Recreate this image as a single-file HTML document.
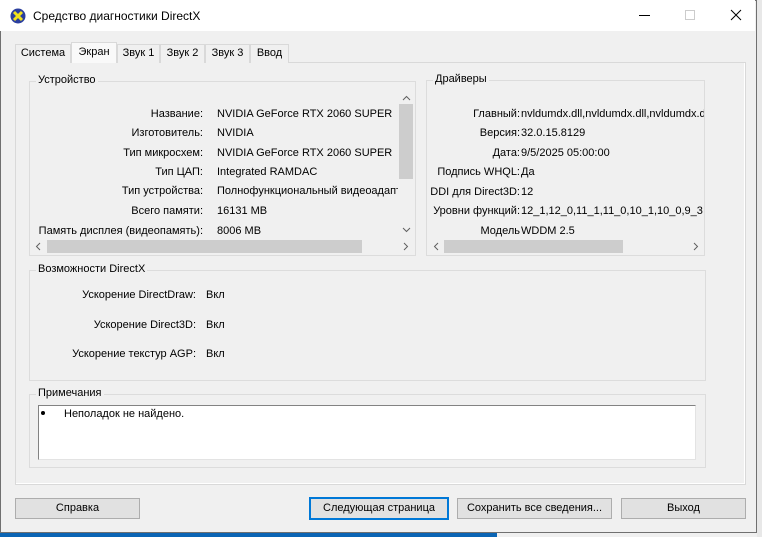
<!DOCTYPE html>
<html><head><meta charset="utf-8"><style>
*{box-sizing:border-box;margin:0;padding:0}
body{width:762px;height:537px;overflow:hidden;background:#f0f0f0;font-family:"Liberation Sans","DejaVu Sans",sans-serif;font-size:11px;color:#000;position:relative}
.a{position:absolute}
.win{left:0;top:0;width:757px;height:533px;border:1px solid #707070;background:#f0f0f0}
.title{left:0;top:0;width:755px;height:31px;background:#fff}
.grp{border:1px solid #dcdcdc}
.lbl{position:absolute;background:#f0f0f0;padding:0 2px;top:-8px;left:6px;white-space:nowrap}
.r{text-align:right;white-space:nowrap}
.l{white-space:nowrap}
.btn{border:1px solid #adadad;background:#e1e1e1;text-align:center;line-height:19px;height:21px}
.tab{top:44px;height:19px;border:1px solid #d9d9d9;border-bottom:none;background:#f0f0f0;text-align:center;line-height:17px}
svg.ar{position:absolute}
</style></head><body>
<div class="a" style="left:0;top:533px;width:497px;height:4px;background:#0a64b4"></div>
<div class="a" style="left:757px;top:0;width:5px;height:537px;background:#e8e8e8"></div>
<div class="a win"></div>
<div class="a title"></div>
<svg class="a" style="left:10px;top:8px" width="16" height="16"><circle cx="8" cy="8" r="7.5" fill="#2b3f9e"/><path d="M4 4L12 12M12 4L4 12" stroke="#f2e21c" stroke-width="3"/></svg>
<div class="a l" style="left:33px;top:9px;font-size:12px">Средство диагностики DirectX</div>
<div class="a" style="left:639px;top:15px;width:11px;height:1px;background:#000"></div>
<div class="a" style="left:685px;top:10px;width:10px;height:10px;border:1px solid #ccc"></div>
<svg class="a" style="left:730px;top:9px" width="12" height="12"><path d="M1 1L11 11M11 1L1 11" stroke="#000" stroke-width="1"/></svg>

<div class="a" style="left:15px;top:62px;width:731px;height:423px;border:1px solid #d9d9d9;background:#f9f9f9"></div>
<div class="a tab" style="left:15px;width:56px">Система</div>
<div class="a tab" style="left:71px;top:42px;height:21px;width:46px;background:#f9f9f9;line-height:19px">Экран</div>
<div class="a tab" style="left:117px;width:43px">Звук 1</div>
<div class="a tab" style="left:160px;width:45px">Звук 2</div>
<div class="a tab" style="left:205px;width:45px">Звук 3</div>
<div class="a tab" style="left:250px;width:39px">Ввод</div>
<div class="a" style="left:16px;top:63px;width:729px;height:421px;background:#f0f0f0;border-right:1px solid #fff;border-bottom:1px solid #fff"></div>

<div class="a grp" style="left:29px;top:81px;width:387px;height:175px"><span class="lbl">Устройство</span></div>
<div class="a r" style="left:30px;top:108px;width:173px">Название:</div>
<div class="a r" style="left:30px;top:127px;width:173px">Изготовитель:</div>
<div class="a r" style="left:30px;top:147px;width:173px">Тип микросхем:</div>
<div class="a r" style="left:30px;top:166px;width:173px">Тип ЦАП:</div>
<div class="a r" style="left:30px;top:185px;width:173px">Тип устройства:</div>
<div class="a r" style="left:30px;top:205px;width:173px">Всего памяти:</div>
<div class="a r" style="left:30px;top:225px;width:173px">Память дисплея (видеопамять):</div>
<div class="a" style="left:217px;top:100px;width:181px;height:138px;overflow:hidden">
<div class="l" style="position:absolute;top:8px">NVIDIA GeForce RTX 2060 SUPER</div>
<div class="l" style="position:absolute;top:27px">NVIDIA</div>
<div class="l" style="position:absolute;top:47px">NVIDIA GeForce RTX 2060 SUPER</div>
<div class="l" style="position:absolute;top:66px">Integrated RAMDAC</div>
<div class="l" style="position:absolute;top:85px">Полнофункциональный видеоадаптер</div>
<div class="l" style="position:absolute;top:105px">16131 MB</div>
<div class="l" style="position:absolute;top:125px">8006 MB</div>
</div>
<div class="a" style="left:398px;top:97px;width:16px;height:141px;background:#f0f0f0"></div>
<div class="a" style="left:399px;top:104px;width:14px;height:75px;background:#cdcdcd"></div>
<svg class="ar" style="left:402px;top:95px" width="9" height="6"><path d="M1 5L4.5 1.5L8 5" fill="none" stroke="#606060"/></svg>
<svg class="ar" style="left:402px;top:227px" width="9" height="6"><path d="M1 1L4.5 4.5L8 1" fill="none" stroke="#606060"/></svg>
<div class="a" style="left:30px;top:238px;width:384px;height:17px;background:#f0f0f0"></div>
<div class="a" style="left:47px;top:240px;width:315px;height:13px;background:#cdcdcd"></div>
<svg class="ar" style="left:35px;top:242px" width="6" height="9"><path d="M5 1L1.5 4.5L5 8" fill="none" stroke="#606060"/></svg>
<svg class="ar" style="left:403px;top:242px" width="6" height="9"><path d="M1 1L4.5 4.5L1 8" fill="none" stroke="#606060"/></svg>

<div class="a grp" style="left:426px;top:80px;width:279px;height:176px"><span class="lbl">Драйверы</span></div>
<div class="a r" style="left:427px;top:108px;width:93px">Главный:</div>
<div class="a r" style="left:427px;top:127px;width:93px">Версия:</div>
<div class="a r" style="left:427px;top:147px;width:93px">Дата:</div>
<div class="a r" style="left:427px;top:166px;width:93px">Подпись WHQL:</div>
<div class="a r" style="left:427px;top:186px;width:93px">DDI для Direct3D:</div>
<div class="a r" style="left:427px;top:205px;width:93px">Уровни функций:</div>
<div class="a r" style="left:427px;top:225px;width:93px">Модель</div>
<div class="a" style="left:521px;top:100px;width:183px;height:138px;overflow:hidden">
<div class="l" style="position:absolute;top:8px;left:0">nvldumdx.dll,nvldumdx.dll,nvldumdx.dll</div>
<div class="l" style="position:absolute;top:27px">32.0.15.8129</div>
<div class="l" style="position:absolute;top:47px">9/5/2025 05:00:00</div>
<div class="l" style="position:absolute;top:66px">Да</div>
<div class="l" style="position:absolute;top:86px">12</div>
<div class="l" style="position:absolute;top:105px">12_1,12_0,11_1,11_0,10_1,10_0,9_3</div>
<div class="l" style="position:absolute;top:125px">WDDM 2.5</div>
</div>
<div class="a" style="left:427px;top:238px;width:277px;height:17px;background:#f0f0f0"></div>
<div class="a" style="left:444px;top:240px;width:179px;height:13px;background:#cdcdcd"></div>
<svg class="ar" style="left:433px;top:242px" width="6" height="9"><path d="M5 1L1.5 4.5L5 8" fill="none" stroke="#606060"/></svg>
<svg class="ar" style="left:693px;top:242px" width="6" height="9"><path d="M1 1L4.5 4.5L1 8" fill="none" stroke="#606060"/></svg>

<div class="a grp" style="left:29px;top:270px;width:677px;height:111px"><span class="lbl">Возможности DirectX</span></div>
<div class="a r" style="left:30px;top:289px;width:166px">Ускорение DirectDraw:</div>
<div class="a r" style="left:30px;top:319px;width:166px">Ускорение Direct3D:</div>
<div class="a r" style="left:30px;top:348px;width:166px">Ускорение текстур AGP:</div>
<div class="a l" style="left:206px;top:289px">Вкл</div>
<div class="a l" style="left:206px;top:319px">Вкл</div>
<div class="a l" style="left:206px;top:348px">Вкл</div>

<div class="a grp" style="left:29px;top:394px;width:677px;height:74px"><span class="lbl">Примечания</span></div>
<div class="a" style="left:38px;top:405px;width:658px;height:55px;background:#fff;border:1px solid #828282;border-right-color:#e3e3e3;border-bottom-color:#e3e3e3"></div>
<div class="a" style="left:41px;top:411px;width:4px;height:4px;background:#000;border-radius:2px"></div>
<div class="a l" style="left:64px;top:408px">Неполадок не найдено.</div>

<div class="a btn" style="left:15px;top:498px;width:125px">Справка</div>
<div class="a btn" style="left:309px;top:497px;width:140px;height:23px;border:2px solid #0078d7;line-height:18px">Следующая страница</div>
<div class="a btn" style="left:457px;top:498px;width:155px">Сохранить все сведения...</div>
<div class="a btn" style="left:621px;top:498px;width:125px">Выход</div>
</body></html>
